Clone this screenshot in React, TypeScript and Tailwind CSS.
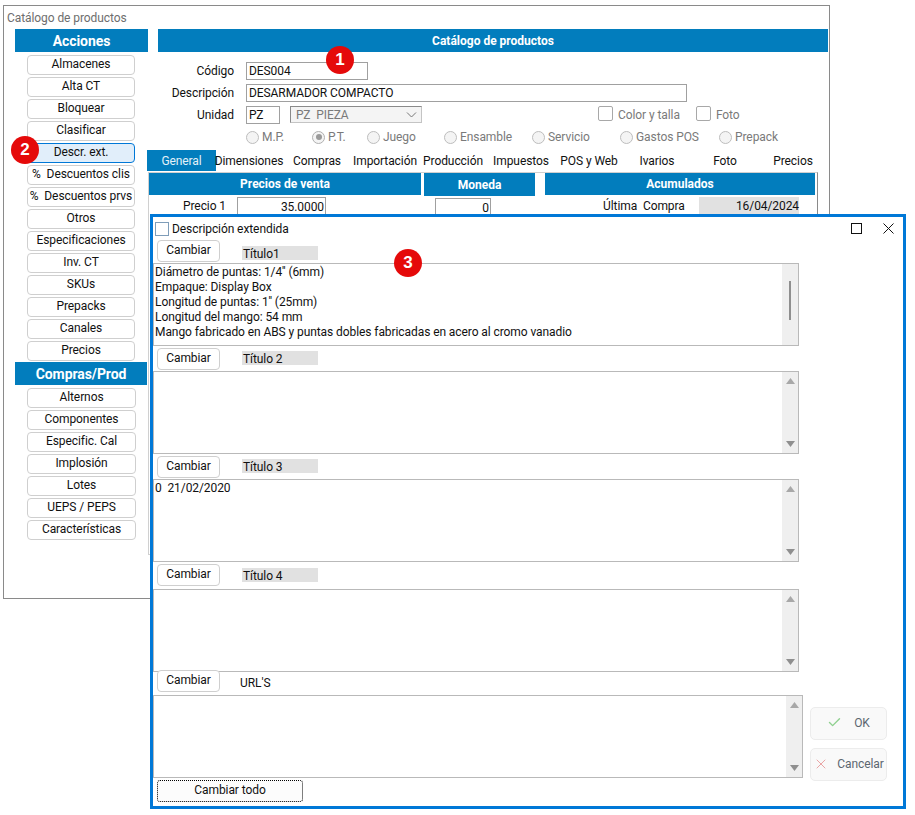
import React from "react";
import { Check, X } from "lucide-react";

const accionesTop = ["Almacenes", "Alta CT", "Bloquear", "Clasificar", "Descr. ext.", "%  Descuentos clis", "%  Descuentos prvs", "Otros", "Especificaciones", "Inv. CT", "SKUs", "Prepacks", "Canales", "Precios"];
const accionesCompras = ["Alternos", "Componentes", "Especific. Cal", "Implosión", "Lotes", "UEPS / PEPS", "Características"];
const tabs = ["General", "Dimensiones", "Compras", "Importación", "Producción", "Impuestos", "POS y Web", "Ivarios", "Foto", "Precios"];
const radios = [
  { label: "M.P.", width: "w-[66px]" },
  { label: "P.T.", width: "w-[55px]", checked: true },
  { label: "Juego", width: "w-[77px]" },
  { label: "Ensamble", width: "w-[88px]" },
  { label: "Servicio", width: "w-[88px]" },
  { label: "Gastos POS", width: "w-[99px]" },
  { label: "Prepack", width: "w-[80px]" },
];

const Badge = ({ n, className }: { n: number; className: string }) => (
  <div className={`absolute z-20 flex h-[28px] w-[28px] items-center justify-center rounded-full bg-[#e50a0a] font-['Liberation_Sans',sans-serif] text-[17px] font-bold text-white ${className}`}>
    {n}
  </div>
);

const SideHeader = ({ children, className = "" }: { children: React.ReactNode; className?: string }) => (
  <div className={`flex h-[23px] items-center justify-center bg-[#027dbd] pt-[1px] text-[14px] font-bold text-white ${className}`}>{children}</div>
);

const SideButton = ({ label, active, width }: { label: string; active?: boolean; width: string }) => (
  <div
    className={`ml-[12px] flex h-[20px] shrink-0 items-center justify-center whitespace-pre rounded-[4px] border pb-[2px] text-[#111] ${width} ${
      active ? "border-[#0078d7] bg-[#e1eefa]" : "border-[#cfcfcf] bg-white"
    }`}
  >
    {label}
  </div>
);

const Field = ({ label, value, width }: { label: string; value: string; width: string }) => (
  <div className="flex h-[18px] items-center">
    <span className="w-[76px] pb-[1px] text-right text-[#111]">{label}</span>
    <div className={`ml-[12px] flex h-[18px] items-center border border-[#a0a0a0] bg-white pl-[2px] text-[#111] ${width}`}>{value}</div>
  </div>
);

const Arrow = ({ down }: { down?: boolean }) => (
  <svg width="9" height="6" viewBox="0 0 9 6" className="shrink-0">
    <polygon points={down ? "0,0 9,0 4.5,6" : "4.5,0 9,6 0,6"} fill={down ? "#8f8f8f" : "#a8a8a8"} />
  </svg>
);

const ScrollTrack = ({ thumb }: { thumb?: boolean }) => (
  <div className={`flex h-full w-[16px] shrink-0 flex-col items-center bg-[#efefef] ${thumb ? "pt-[17px]" : "justify-between py-[6px]"}`}>
    {thumb ? (
      <div className="h-[39px] w-[2px] bg-[#8f8f8f]" />
    ) : (
      <>
        <Arrow />
        <Arrow down />
      </>
    )}
  </div>
);

const TextBox = ({ lines, thumb, width = "w-[646px]" }: { lines?: string[]; thumb?: boolean; width?: string }) => (
  <div className={`flex h-[83px] shrink-0 border border-[#b9b9b9] bg-white ${width}`}>
    <div className="flex-1 whitespace-pre pl-[1px] pt-[1px] leading-[15px] text-[#111]">
      {lines?.map((l) => <div key={l}>{l}</div>)}
    </div>
    <ScrollTrack thumb={thumb} />
  </div>
);

const CambiarRow = ({ title, plain, titleTop = "mt-[6px]", className = "h-[23px]" }: { title: string; plain?: boolean; titleTop?: string; className?: string }) => (
  <div className={`relative z-10 flex shrink-0 items-start pl-[4px] ${className}`}>
    <div className="flex h-[22px] w-[63px] items-center justify-center rounded-[4px] border border-[#cfcfcf] bg-white pb-[2px] text-[#111]">Cambiar</div>
    <div className={`flex h-[14px] w-[76px] items-center text-[#111] ${titleTop} ${plain ? "ml-[20px]" : "ml-[22px] bg-[#e1e1e1] pl-[1px] pt-[1px]"}`}>{title}</div>
  </div>
);

const Radio = ({ label, checked, width }: { label: string; checked?: boolean; width: string }) => (
  <div className={`flex items-center ${width}`}>
    <span className={`flex h-[13px] w-[13px] items-center justify-center rounded-full border bg-[#f4f4f4] ${checked ? "border-[#b0b0b0]" : "border-[#bdbdbd]"}`}>
      {checked && <span className="h-[6px] w-[6px] rounded-full bg-[#9a9a9a]" />}
    </span>
    <span className="ml-[3px] text-[#7a7a7a]">{label}</span>
  </div>
);

const ActionButton = ({ icon, label }: { icon: React.ReactNode; label: string }) => (
  <div className="flex h-[33px] w-[77px] items-center justify-center rounded-[5px] border border-[#ececec] bg-[#f9f9f9] pb-[2px] text-[#5c6670]">
    {icon}
    <span>{label}</span>
  </div>
);

export default function App() {
  return (
    <div className="relative h-[815px] w-[915px] overflow-hidden bg-white font-['Roboto',sans-serif] text-[12px] tracking-[-0.08px]">
      {/* ventana de atras */}
      <div className="absolute left-[3px] top-[5px] h-[594px] w-[827px] border border-[#8a8a8a] bg-white">
        <div className="flex h-[23px] items-center pl-[3px] text-[#6e6e6e]">Catálogo de productos</div>
        <div className="flex pl-[11px]">
          <div className="flex w-[133px] shrink-0 flex-col">
            <SideHeader>Acciones</SideHeader>
            <div className="mt-[3px] flex flex-col gap-[2px]">
              {accionesTop.map((a) => (
                <SideButton key={a} label={a} width="w-[108px]" active={a === "Descr. ext."} />
              ))}
            </div>
            <SideHeader className="mt-[1px] w-[132px]">Compras/Prod</SideHeader>
            <div className="mt-[3px] flex flex-col gap-[2px]">
              {accionesCompras.map((a) => (
                <SideButton key={a} label={a} width="w-[109px]" />
              ))}
            </div>
          </div>

          <div className="ml-[10px] flex w-[670px] flex-col">
            <div className="flex h-[23px] items-center justify-center bg-[#027dbd] text-[12px] font-bold tracking-normal text-white">Catálogo de productos</div>
            <div className="mt-[10px] flex flex-col gap-[4px]">
              <Field label="Código" value="DES004" width="w-[122px]" />
              <Field label="Descripción" value="DESARMADOR COMPACTO" width="w-[441px]" />
              <div className="flex h-[18px] items-center">
                <Field label="Unidad" value="PZ" width="w-[34px]" />
                <div className="ml-[10px] flex h-[17px] w-[132px] items-center justify-between self-start border border-[#c4c4c4] border-l-[#8a8a8a] border-t-[#8a8a8a] bg-[#f4f4f4] pl-[5px] pr-[4px] text-[#7a7a7a]">
                  <span className="whitespace-pre">PZ  PIEZA</span>
                  <svg width="11" height="6" viewBox="0 0 11 6" fill="none" stroke="#777" strokeWidth="1">
                    <path d="M1 .5l4.5 4.5L10 .5" />
                  </svg>
                </div>
                <span className="ml-[176px] h-[15px] w-[15px] self-start rounded-[2px] border border-[#a8a8a8] bg-white" />
                <span className="ml-[5px] text-[#7a7a7a]">Color y talla</span>
                <span className="ml-[16px] h-[15px] w-[15px] self-start rounded-[2px] border border-[#a8a8a8] bg-white" />
                <span className="ml-[5px] text-[#7a7a7a]">Foto</span>
              </div>
            </div>
            <div className="ml-[88px] mt-[6px] flex h-[14px]">
              {radios.map((r) => (
                <Radio key={r.label} {...r} />
              ))}
            </div>
            <div className="-ml-[11px] mt-[6px] grid h-[21px] w-[680px] grid-cols-[repeat(10,68px)]">
              {tabs.map((t, i) => (
                <div key={t} className={`flex items-center justify-center whitespace-nowrap ${i === 0 ? "w-[69px] bg-[#027dbd] text-[#e4f1f8]" : "text-[#111]"}`}>
                  {t}
                </div>
              ))}
            </div>
            <div className="-ml-[10px] mt-[1px] flex h-[383px] w-[670px] items-start border border-[#d0d0d0] border-r-[#8a8a8a]">
              <div className="w-[272px] shrink-0">
                <div className="flex h-[22px] items-center justify-center bg-[#027dbd] text-[12px] font-bold tracking-normal text-white">Precios de venta</div>
                <div className="mt-[2px] flex items-start">
                  <span className="w-[77px] text-right text-[#111]">Precio 1</span>
                  <div className="ml-[11px] h-[20px] w-[89px] border border-[#a0a0a0] pr-[1px] text-right text-[#111]">35.0000</div>
                </div>
              </div>
              <div className="ml-[3px] w-[111px] shrink-0">
                <div className="flex h-[23px] items-center justify-center bg-[#027dbd] text-[12px] font-bold tracking-normal text-white">Moneda</div>
                <div className="ml-[11px] mt-[2px] h-[20px] w-[56px] border border-[#a0a0a0] pr-[1px] text-right text-[#111]">0</div>
              </div>
              <div className="ml-[10px] w-[270px] shrink-0">
                <div className="flex h-[22px] items-center justify-center bg-[#027dbd] text-[12px] font-bold tracking-normal text-white">Acumulados</div>
                <div className="mt-[2px] flex items-center">
                  <span className="ml-[58px] w-[96px] whitespace-pre text-[#111]">Última  Compra</span>
                  <div className="h-[18px] w-[100px] bg-[#e1e1e1] text-right text-[#111]">16/04/2024</div>
                </div>
              </div>
            </div>
          </div>
        </div>
      </div>

      {/* dialogo descripcion extendida */}
      <div className="absolute left-[150px] top-[214px] z-10 flex h-[595px] w-[756px] flex-col border-[3px] border-[#0078d7] bg-white">
        <div className="flex h-[23px] shrink-0 items-center pl-[2px]">
          <span className="h-[14px] w-[14px] border border-[#7f9db9] bg-white" />
          <span className="ml-[3px] text-[#111]">Descripción extendida</span>
          <span className="ml-auto h-[11px] w-[11px] border border-[#111]" />
          <svg width="11" height="11" viewBox="0 0 11 11" fill="none" stroke="#111" strokeWidth="1" className="ml-[21px] mr-[9px]">
            <path d="M.5.5l10 10M10.5.5l-10 10" />
          </svg>
        </div>
        <CambiarRow title="Título1" />
        <TextBox
          thumb
          lines={[
            "Diámetro de puntas: 1/4'' (6mm)",
            "Empaque: Display Box",
            "Longitud de puntas: 1'' (25mm)",
            "Longitud del mango: 54 mm",
            "Mango fabricado en ABS y puntas dobles fabricadas en acero al cromo vanadio",
          ]}
        />
        <div className="h-[2px] shrink-0" />
        <CambiarRow title="Título 2" titleTop="mt-[3px]" />
        <TextBox />
        <div className="h-[2px] shrink-0" />
        <CambiarRow title="Título 3" titleTop="mt-[3px]" />
        <TextBox lines={["0  21/02/2020"]} />
        <div className="h-[2px] shrink-0" />
        <CambiarRow title="Título 4" titleTop="mt-[4px]" className="h-[25px]" />
        <TextBox />
        <CambiarRow title="URL'S" plain className="-mt-[2px] h-[25px]" />
        <div className="flex">
          <div className="flex flex-col">
            <TextBox width="w-[650px]" />
            <div className="ml-[4px] mt-[2px] flex h-[22px] w-[146px] items-center justify-center rounded-[3px] border border-dotted border-[#000] bg-[#fcfcfc] pb-[2px] text-[#111]">Cambiar todo</div>
          </div>
          <div className="ml-[7px] flex flex-col gap-[8px] pt-[12px]">
            <ActionButton icon={<Check size={15} strokeWidth={2.25} className="mr-[12px] text-[#8fd08f]" />} label="OK" />
            <ActionButton icon={<X size={16} strokeWidth={1.5} className="mr-[8px] text-[#eaa5a5]" />} label="Cancelar" />
          </div>
        </div>
      </div>

      <Badge n={1} className="left-[326px] top-[46px]" />
      <Badge n={2} className="left-[11px] top-[136px]" />
      <Badge n={3} className="left-[394px] top-[249px]" />
    </div>
  );
}
